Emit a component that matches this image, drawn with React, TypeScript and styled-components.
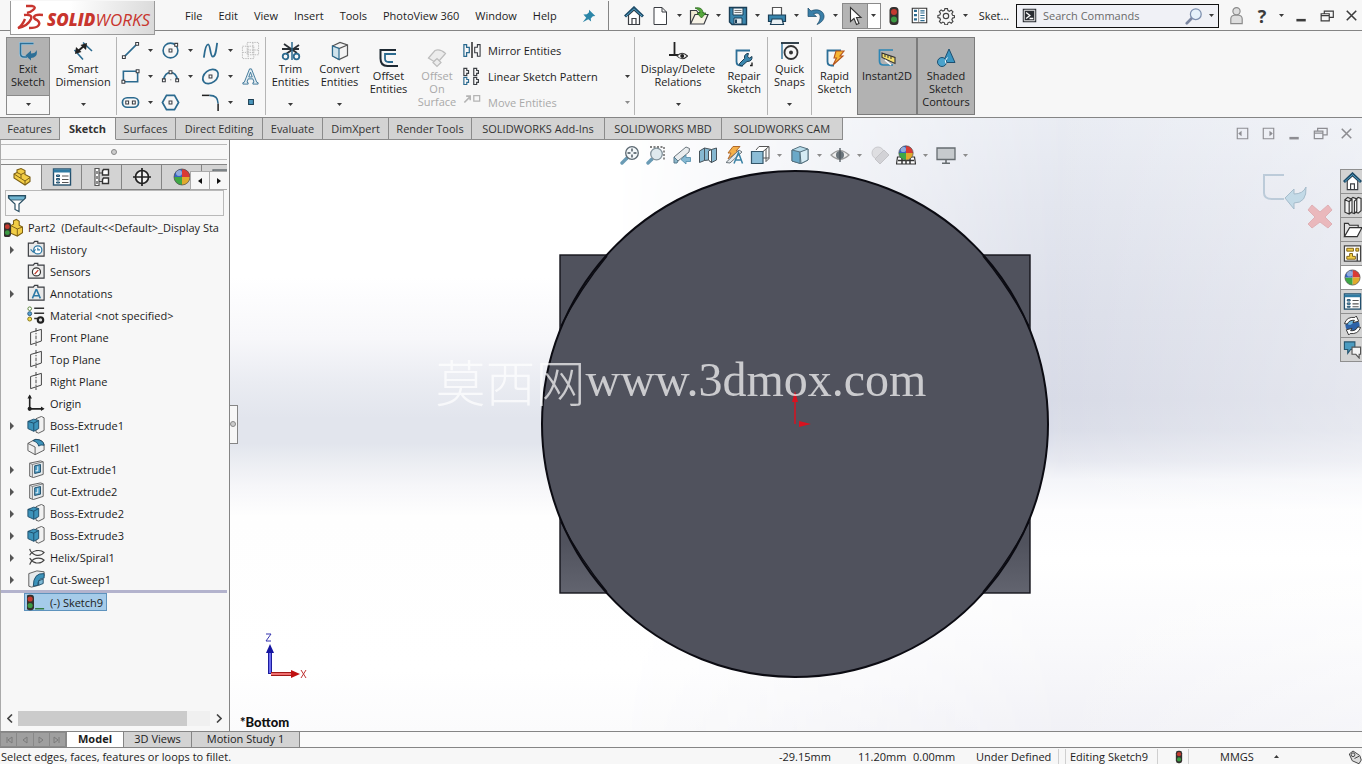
import React from "react";
import styled, { createGlobalStyle, css } from "styled-components";

const LINE = "#858585";
const BLUE = "#2b6a8f";
const DARK = "#3a3d42";
const UI_FONT = `"Open Sans", "Noto Sans", sans-serif`;

const GlobalStyle = createGlobalStyle`
  *, *::before, *::after { box-sizing: border-box; }
  body { margin: 0; background: #f7f7f7; font-family: ${UI_FONT}; font-size: 11px; color: #1c1c1c; }
  button, input { font: inherit; color: inherit; }
  ul { list-style: none; margin: 0; padding: 0; }
`;

/* ---------- icons ---------- */

const ball = (
  <>
    <path d="M10 10V2a8 8 0 0 1 8 8z" fill="#d93a35" />
    <path d="M10 10h8a8 8 0 0 1-8 8z" fill="#e0a92c" />
    <path d="M10 10v8a8 8 0 0 1-8-8z" fill="#3fa845" />
    <path d="M10 10H2a8 8 0 0 1 8-8z" fill="#3564c4" />
    <circle cx="7" cy="6" r="3" fill="#fff" opacity=".45" />
    <circle cx="10" cy="10" r="8" fill="none" stroke="#4a4a4a" strokeWidth=".7" />
  </>
);

const lights = (
  <>
    <rect x="5.500" y="1" width="9" height="18" rx="3.500" fill="#33302e" />
    <circle cx="10" cy="6" r="3" fill="#c43a30" />
    <circle cx="10" cy="13.500" r="3" fill="#3c9a43" />
  </>
);

const sheetFold = <path d="M4 1.500h8l4.500 4.500v12.500H4z M12 1.500v4.500h4.500" fill="#fff" stroke={DARK} />;

const houseIcon = (
  <>
    <path d="M4.500 9v9.500h11V9L10 4z" fill="#fff" stroke={DARK} strokeWidth="1.200" />
    <path d="M8 18.500v-6h4v6" fill="none" stroke={DARK} strokeWidth="1.200" />
    <path d="M1 10.500L10 2l9 8.500" fill="none" stroke="#1d4b68" strokeWidth="3" />
    <path d="M2 10L10 2.800 18 10" fill="none" stroke="#57a3c7" strokeWidth="1" />
  </>
);

const folderBase = <path d="M1.500 18V3.500H7l1.500-2H12v2h7V18z" fill="#e9e9e9" stroke={DARK} strokeWidth="1.300" />;

const plane = (
  <>
    <path d="M4 5l12-3.500v13L4 18.500z" fill="none" stroke="#444" strokeWidth="1.100" />
    <path d="M10 0v20" stroke="#333" strokeDasharray="4 1.500 1.500 1.500" />
  </>
);

const bossExtrude = (
  <>
    <path d="M10 3l6-2.500 3 1.500v14l-6 3-3-1z" fill="#f1f1f1" stroke="#555" />
    <path d="M1 6l6.500-2.500 5.500 1.500v9l-5.500 3L1 14z" fill="#3d93ba" stroke="#1b4a66" />
    <path d="M1 6l6.500 2 5.500-3M7.500 8v9" fill="none" stroke="#1b4a66" />
  </>
);

const cutExtrude = (
  <>
    <path d="M3 3.500L15 1l3 1v14L7 19.500 3 18z" fill="#e7eaec" stroke="#555" />
    <path d="M6 5v14M6 5l12-3M3 3.500L6 5" fill="none" stroke="#777" />
    <path d="M8.500 6.500l6.500-1.500v8.500l-6.500 1.500z" fill="#4b9bc3" stroke="#1b4a66" />
    <path d="M12 7v5H9.500" fill="none" stroke="#fff" />
  </>
);

const bracketShape = "M3 4h5v3.500h3v5H8V16H3z";

const paneList = (
  <>
    <rect x="1.500" y="2" width="17" height="16" fill="#fff" stroke="#24506d" strokeWidth="1.400" />
    <path d="M1.500 4h17" stroke="#2f7ba3" strokeWidth="3" />
    <path d="M4.500 8h3v1.500h-3zM4.500 11.500h3V13h-3zM4.500 15h3v1h-3z" fill="#77b7d6" stroke="#24506d" />
    <path d="M10 9h6.500M10 12.500h6.500M10 15.500h6.500" stroke="#555" strokeWidth="1.200" />
  </>
);

const sheetList = (
  <>
    <path d="M1.500 1.500h17v17h-17z" fill="#fff" stroke="#333" strokeWidth="1.300" />
    <path d="M9 2v16" stroke="#777" />
    <path d="M3.500 4.500h3.500M3.500 9.500h3.500M3.500 14.500h3.500" stroke={BLUE} strokeWidth="2.600" />
    <path d="M11 4.500h5M11 7h5M11 10h5M11 13h5M11 16h5" stroke={BLUE} strokeWidth="1.300" />
  </>
);

const sketchCorner = <path d="M16 2.500H2.500v11q0 4 4 4H9" fill="none" stroke="#2d6f97" strokeWidth="1.800" />;

const icons: Record<string, React.ReactNode> = {
  pin: <path d="M10 1l9 9-3.500.5-3 3 .5 4.500-4-3.500L1 19l5-6.500L2 8l5-.5 3-3z" fill="#2c86a8" />,
  home: houseIcon,
  newDoc: sheetFold,
  open: (
    <>
      <path d="M1.500 18V4.500h6l1.500 2h5V9" fill="#f1ead2" stroke={DARK} strokeWidth="1.200" />
      <path d="M1.500 18L6 8.500h13L15 18z" fill="#f7f3e6" stroke={DARK} strokeWidth="1.200" />
      <path d="M6 2c5-1 8 1 8 5h3l-4.500 5L8 7h3c0-2-2-4-5-5z" fill="#57a83c" stroke="#2c6b20" strokeWidth=".8" />
    </>
  ),
  save: (
    <>
      <path d="M1.500 1.500h17v17H4l-2.500-2.500z" fill="#3a86ad" stroke="#1b3f57" strokeWidth="1.400" />
      <path d="M5 2h10v7H5z" fill="#f0f5f8" stroke="#1b3f57" />
      <path d="M6.500 4.500h7M6.500 6.500h7" stroke="#777" />
      <path d="M6 12h8v6H6z" fill="#dbe7ee" stroke="#1b3f57" />
      <path d="M8 13.500v3.500" stroke="#1b3f57" strokeWidth="2" />
    </>
  ),
  print: (
    <>
      <path d="M5.500 9V1.500h9V9" fill="#fff" stroke="#555" strokeWidth="1.200" />
      <path d="M1.500 9h17v6.500h-17z" fill="#3a86ad" stroke="#1b3f57" strokeWidth="1.200" />
      <path d="M5 13h10l1.500 5.500h-13z" fill="#e8f0f4" stroke="#1b3f57" strokeWidth="1.200" />
    </>
  ),
  undo: <path d="M2 2v8.500h8.500L7.500 8c4-2 7.500 0 6.500 4.500-.3 2-1.500 4-3 6 5-2 7.500-5.500 7-9-.8-5.500-8-7-13-4.500z" fill="#3a7fa8" stroke="#1d4b68" strokeWidth=".7" />,
  cursor: <path d="M5.500 1.500v14l3.500-3 2.500 6 2.500-1-2.500-6h4.500z" fill="#fff" stroke="#333" strokeWidth="1.100" />,
  lights,
  options: sheetList,
  gear: (
    <>
      <circle cx="10" cy="10" r="3" fill="none" stroke="#444" strokeWidth="1.300" />
      <path
        d="M8.500 2h3l.5 2.300 1.800.8 2-1.300 2 2-1.300 2 .8 1.800 2.200.5v2.300l-2.200.5-.8 1.900 1.300 2-2 2-2-1.300-1.800.8-.5 2.200h-3l-.5-2.200-1.800-.8-2 1.300-2-2 1.300-2-.8-1.900-2.200-.5V9.800l2.200-.5.8-1.800-1.300-2 2-2 2 1.300 1.800-.8z"
        fill="none" stroke="#444" strokeWidth="1.300" transform="translate(.5 -.2) scale(.97)"
      />
    </>
  ),
  command: (
    <>
      <path d="M1 1h18v18H1z" fill="#2a2d33" />
      <path d="M3 3h14v14H3z" fill="none" stroke="#fff" strokeWidth="1.200" />
      <path d="M5.500 6l5 4-5 4M10 14h5" fill="none" stroke="#fff" strokeWidth="1.800" />
    </>
  ),
  search: (
    <>
      <path d="M8 12L2 18" stroke="#7b86a0" strokeWidth="3" strokeLinecap="round" />
      <circle cx="12" cy="8" r="6" fill="#e6f1fa" stroke="#7d8fae" strokeWidth="1.400" />
    </>
  ),
  user: (
    <g fill="#dedede" stroke="#8a8a8a" strokeWidth="1.200">
      <path d="M4 18.500v-5q0-4 6-4t6 4v5z" />
      <circle cx="10" cy="5.500" r="3.800" />
    </g>
  ),
  minimize: <path d="M4 14h11v3H4z" fill="currentColor" />,
  restore: <path d="M3.500 7.500h9v8h-9zM3.500 9.500h9M7 7V4.500h10v7h-4" fill="none" stroke="currentColor" strokeWidth="1.300" />,
  close: <path d="M5 5l10 10M15 5L5 15" stroke="currentColor" strokeWidth="1.600" />,
  prevPane: (
    <>
      <path d="M4.500 4.500h11v11h-11z" fill="none" stroke="currentColor" strokeWidth="1.200" />
      <path d="M9 7v6l-3.500-3z" fill="currentColor" />
    </>
  ),
  nextPane: (
    <>
      <path d="M4.500 4.500h11v11h-11z" fill="none" stroke="currentColor" strokeWidth="1.200" />
      <path d="M11 7v6l3.500-3z" fill="currentColor" />
    </>
  ),

  exitSketch: (
    <>
      <path d="M15.500 2.500H2.500v10q0 3.500 3.500 3.500H9" fill="none" stroke="#9fc6dc" strokeWidth="3" />
      <path d="M15.500 2.500H2.500v10q0 3.500 3.500 3.500H9" fill="none" stroke="#2d6f97" strokeWidth="1.500" />
      <path d="M7.500 14.500L13 9.500v3q4.500 0 5.500-3.500 2 7-5.500 8v2.500z" fill="#2d6f97" />
    </>
  ),
  dimension: (
    <>
      <path d="M10 1.500l9 8.500M1.500 9L10 18.500" fill="none" stroke={BLUE} strokeWidth="1.600" />
      <path d="M4 11L12 4" stroke="#222" strokeWidth="2" />
      <path d="M2 13l1-7 5.500 5zM14 2l-1 7-5.500-5z" fill="#222" />
    </>
  ),
  line: (
    <>
      <path d="M3 17L17 3" stroke={BLUE} strokeWidth="1.700" />
      <path d="M1.500 15.500h3v3h-3zM15.500 1.500h3v3h-3z" fill="#fff" stroke={DARK} strokeWidth="1.100" />
    </>
  ),
  circle: (
    <>
      <circle cx="10" cy="10" r="7.800" fill="none" stroke={BLUE} strokeWidth="1.700" />
      <path d="M8.500 8.500h3v3h-3zM14.500 2.500h3v3h-3z" fill="#fff" stroke={DARK} strokeWidth="1.100" />
    </>
  ),
  spline: <path d="M3 17.500C4 9 5 3.500 7.500 3.500S9.500 16.500 12.500 16.500 16 9 17 2" fill="none" stroke={BLUE} strokeWidth="1.900" />,
  sketchGrid: <path d="M6.500 1.500h12v13h-12zM1.500 5.500h12v13h-12zM6.500 9.500h12M12.500 1.500v13M1.500 12h12M7.500 5.500v13" fill="none" stroke="#b9b9b9" strokeWidth="1" strokeDasharray="1.500 1" />,
  rect: (
    <>
      <path d="M2.500 4.500h15v11h-15z" fill="none" stroke={BLUE} strokeWidth="1.700" />
      <path d="M1 14h3v3H1zM16 3h3v3h-3z" fill="#fff" stroke={DARK} strokeWidth="1.100" />
    </>
  ),
  arc: (
    <>
      <path d="M3 14C3 3 17 3 17 14" fill="none" stroke={BLUE} strokeWidth="1.700" />
      <path d="M1.500 12.500h3v3h-3zM15.500 12.500h3v3h-3zM8.500 4h3v3h-3z" fill="#fff" stroke={DARK} strokeWidth="1.100" />
      <path d="M9.500 13.500h1.500" stroke="#999" />
    </>
  ),
  ellipse: (
    <>
      <ellipse cx="10" cy="10" rx="9" ry="6.500" transform="rotate(-38 10 10)" fill="none" stroke={BLUE} strokeWidth="1.800" />
      <path d="M8.500 8.500h3v3h-3z" fill="#fff" stroke={DARK} strokeWidth="1.100" />
    </>
  ),
  letter: (
    <path
      d="M2 18v-1.500l1.500-.5L9 2h2l5.500 14 1.500.5V18h-5.500v-1.500l1.200-.5-1.200-3.500h-5L6.300 16l1.200.5V18zM8.200 10.500h3.600L10 5.500z"
      fill="#e3edf2" stroke={BLUE} strokeWidth=".9"
    />
  ),
  slot: (
    <>
      <rect x="1.500" y="5" width="17" height="10" rx="5" fill="none" stroke={BLUE} strokeWidth="1.800" />
      <path d="M5 8.500h3v3H5zM12 8.500h3v3h-3z" fill="#fff" stroke={DARK} strokeWidth="1.100" />
    </>
  ),
  polygon: (
    <>
      <path d="M5.800 2.500h8.400L18.500 10l-4.300 7.500H5.800L1.500 10z" fill="none" stroke={BLUE} strokeWidth="1.800" />
      <path d="M8.500 8.500h3v3h-3z" fill="#fff" stroke={DARK} strokeWidth="1.100" />
    </>
  ),
  fillet: (
    <>
      <path d="M1 2.500h8" stroke="#222" strokeWidth="1.600" />
      <path d="M18 11v8" stroke="#222" strokeWidth="1.600" />
      <path d="M9 2.500q9 0 9 8.500" fill="none" stroke={BLUE} strokeWidth="1.600" />
    </>
  ),
  point: <path d="M7 7h6v6H7z" fill="#4b97bd" stroke="#1c3d52" strokeWidth="1.300" />,
  trim: (
    <>
      <path d="M3 3l13 9M18 4L5 13M1 8h17" stroke="#2a3036" strokeWidth="1.800" />
      <path d="M11 1v18" stroke={BLUE} strokeWidth="1.500" />
      <circle cx="4.500" cy="15.500" r="2.800" fill="none" stroke={BLUE} strokeWidth="1.800" />
      <circle cx="15.500" cy="15.500" r="2.800" fill="none" stroke={BLUE} strokeWidth="1.800" />
    </>
  ),
  convert: (
    <>
      <path d="M2.500 5L10 1.500 17.500 4v10.500L9 18.500l-6.500-3.500z" fill="#f3f3f3" stroke="#555" strokeWidth="1.200" />
      <path d="M2.500 5L9 7.500 17.500 4" fill="none" stroke="#555" strokeWidth="1.200" />
      <path d="M9 7.500v11l-6.500-3.500V5z" fill="#cfe3ec" stroke={BLUE} strokeWidth="1.200" />
    </>
  ),
  offset: (
    <>
      <path d="M17 2H1.500v8.500q0 7.500 7 7.500H19" fill="none" stroke="#1f2a33" strokeWidth="2" />
      <path d="M17 6H6v4.500q0 3.500 3.500 3.500H14" fill="none" stroke={BLUE} strokeWidth="1.800" />
    </>
  ),
  offsetSurface: (
    <g fill="#ececec" stroke="#bdbdbd" strokeWidth="1.200">
      <path d="M1.500 10L8 2.500q5-2 10.500 3L12 13q-2-3-5 .5z" />
      <path d="M6 14.500l4 4 4-4-4-4z" />
    </g>
  ),
  mirror: (
    <>
      <path d="M1 4h3v3h3v6H4v4H1z" fill="none" stroke={BLUE} strokeWidth="1.400" />
      <path d="M19 4h-3v3h-3v6h3v4h3z" fill="none" stroke={DARK} strokeWidth="1.200" />
      <path d="M10 1v18" stroke="#222" strokeWidth="1.600" />
    </>
  ),
  pattern: (
    <>
      <path d={bracketShape} fill="none" stroke={DARK} strokeWidth="2" transform="translate(-1 -1) scale(.65)" />
      <path d={bracketShape} fill="none" stroke={DARK} strokeWidth="2" transform="translate(10 -1) scale(.65)" />
      <path d={bracketShape} fill="none" stroke={BLUE} strokeWidth="2" transform="translate(-1 9) scale(.65)" />
      <path d={bracketShape} fill="none" stroke={DARK} strokeWidth="2" transform="translate(10 9) scale(.65)" />
    </>
  ),
  move: (
    <>
      <path d="M1.500 10.500L8 4M3.500 3.500H8V8" fill="none" stroke="#b4b4b4" strokeWidth="1.800" />
      <path d="M12 3h6.500v6H12z" fill="none" stroke="#b4b4b4" strokeWidth="1.400" />
    </>
  ),
  relations: (
    <>
      <path d="M6.500 1v13M1 14h10" stroke="#222" strokeWidth="1.800" />
      <path d="M9 15q5-5.500 10.500 0-5.500 5.500-10.500 0z" fill="#fff" stroke="#333" strokeWidth="1.100" />
      <circle cx="14.200" cy="15" r="2" fill="#222" />
    </>
  ),
  repair: (
    <>
      {sketchCorner}
      <path d="M16 17.500h2v-3" fill="none" stroke="#222" strokeWidth="1.400" />
      <path d="M5.500 15.500l5-5q-1-3.500 2.500-5l1.500 0-1 3 2 1.500 2.500-1.500q.5 5-5 5l-5 4.500q-3 0-2.500-2.500z" fill="#3a86ad" stroke="#1d3e54" strokeWidth="1" />
    </>
  ),
  snaps: (
    <>
      <path d="M1 2h18M2 2v16" stroke="#2d6f97" strokeWidth="1.400" />
      <path d="M1 2h18" stroke="#222" strokeWidth="1.400" />
      <circle cx="11" cy="11.500" r="6.500" fill="none" stroke="#333" strokeWidth="1.800" />
      <circle cx="11" cy="11.500" r="2" fill="#333" />
    </>
  ),
  rapid: (
    <>
      {sketchCorner}
      <path d="M11 3h8l-4 5h3l-10 9 3.500-7H9z" fill="#f7b733" stroke="#b4541e" strokeWidth="1.100" />
    </>
  ),
  instant: (
    <>
      <path d="M16 2H2.500v11q0 4 4 4H16" fill="none" stroke="#2d86b5" strokeWidth="1.700" />
      <path d="M5 5l13 4.500v6L5 9.500z" fill="#f3dd6b" stroke="#333" strokeWidth="1.100" />
      <path d="M8 6v3M11 7v3M14 8v3" stroke="#333" />
      <path d="M8 12l6 5" stroke="#fff" strokeWidth="1.500" />
    </>
  ),
  contours: (
    <>
      <path d="M13 1l6 13.500H7z" fill="#3a94c0" stroke="#1d4f70" />
      <circle cx="6" cy="14" r="4.500" fill="#4ba3cc" stroke="#1d4f70" />
      <path d="M10 15.500q-2-3 1.500-6" fill="none" stroke="#fff" />
    </>
  ),

  zoomFit: (
    <>
      <path d="M7 13l-5 5" stroke="#6a9bb5" strokeWidth="3.400" strokeLinecap="round" />
      <circle cx="12" cy="8" r="6.300" fill="#f4f8fa" stroke="#5c6972" strokeWidth="1.300" />
      <path d="M12 3.500v3M12 9.500v3M7.500 8h3M13.500 8h3" stroke="#44505a" strokeWidth="1.400" />
    </>
  ),
  zoomArea: (
    <>
      <path d="M4 2h14v14" fill="none" stroke="#555" strokeDasharray="2 1.500" strokeWidth="1.300" />
      <path d="M6 14l-4 4" stroke="#6a9bb5" strokeWidth="3.400" strokeLinecap="round" />
      <circle cx="10.500" cy="9" r="5.800" fill="#dfe9ee" stroke="#83929b" strokeWidth="1.300" />
    </>
  ),
  prevView: (
    <>
      <path d="M2 12L14 2l3.500 1.500L17 7 6 16z" fill="#e9edef" stroke="#6b757c" />
      <path d="M2 12l4 4-1 2H2z" fill="#8fb9cc" stroke="#55798c" />
      <path d="M9 14.500l5-4.500v2.500h4.500v4H14V19z" fill="#86b9d3" stroke="#4f8aa8" strokeWidth=".8" />
    </>
  ),
  section: (
    <>
      <path d="M1.500 6l5-3 7 1.500L18.500 3v12l-5 2.500-3-2.500-4 .5-5 2z" fill="#86b8d1" stroke="#47535b" />
      <path d="M6.500 3v12.500M10.500 6v9M13.500 4.500v13" stroke="#47535b" />
      <path d="M10.500 6l3-1.500v13l-3-2.500z" fill="#fff" stroke="#47535b" />
    </>
  ),
  annotate: (
    <>
      <path d="M9 1.500h7l-4 4.500h3L4 14l3-6H4z" fill="#f5b04a" stroke="#b06a2c" />
      <path d="M2 17.500L15 5l3 2L6 18z" fill="#e4e8ea" stroke="#6b757c" />
      <path d="M10 18.500l4.500-11 4 11M11.500 15h6" fill="none" stroke="#3a82a5" strokeWidth="1.500" />
    </>
  ),
  orient: (
    <>
      <path d="M6 5l3-3.500h10v12L15.500 17" fill="#fff" stroke="#555" />
      <path d="M1.500 6.500h11.500v12H1.500z" fill="#8cbdd6" stroke="#35576a" strokeWidth="1.200" />
      <path d="M13 6.500L19 1.500M13 13h6M16 4v12" fill="none" stroke="#555" />
    </>
  ),
  shaded: (
    <>
      <path d="M2 5l8-3.500L18 4v11l-7 3.500L2 16z" fill="#b8dceb" stroke="#54707e" />
      <path d="M2 5l8 2v11.500L2 16z" fill="#6ba9c8" stroke="#54707e" />
      <path d="M10 7l8-3v11l-7 3.500z" fill="#d5ecf5" stroke="#54707e" />
    </>
  ),
  eye: (
    <>
      <path d="M1 10q9-9 18 0-9 8.500-18 0z" fill="#ededed" stroke="#9a9a9a" strokeWidth="1.200" />
      <circle cx="10" cy="10" r="4" fill="#6a747b" />
      <path d="M10 3v14" stroke="#4d565c" strokeWidth="1.300" />
    </>
  ),
  appearance: (
    <>
      <circle cx="8" cy="8" r="6" fill="#dedee1" stroke="#c9c9cd" />
      <path d="M5 14L14 5l5 5-9 9z" fill="#d2d2d6" stroke="#c4c4c8" />
    </>
  ),
  scene: (
    <>
      <path d="M1.500 12h17l1 7H.5z" fill="#fff" stroke="#333" strokeWidth="1.200" />
      <path d="M2 15.500h16M6 12v7M10 12v7M14 12v7" stroke="#333" strokeWidth="1.500" />
      <g transform="translate(1 -1) scale(.9)">{ball}</g>
    </>
  ),
  monitor: (
    <>
      <path d="M1 3h18v11.500H1z" fill="#c6cacd" stroke="#666c70" strokeWidth="1.300" />
      <path d="M10 15v3M6 18.300h8" stroke="#666c70" strokeWidth="1.600" />
    </>
  ),

  part: (
    <>
      <path d="M2 7l3-1.500V3l4-1.500L13 3.500v4l5 2.500v4.500L13 18 2 11z" fill="#f2cd45" stroke="#7d6014" strokeWidth="1.100" />
      <path d="M2 7l11 7 5-3.500M13 14v4M5 5.500l4 2 4-2M9 7.500V11" fill="none" stroke="#7d6014" />
    </>
  ),
  property: paneList,
  config: (
    <>
      <path d="M3 1.500h4v17H3z" fill="#fff" stroke="#555" strokeWidth="1.200" />
      <path d="M5 4v3M5 9v3M5 14v3M7 6h3M7 14.500h3" fill="none" stroke="#444" strokeWidth="1.200" />
      <path d="M10.500 4l1-1.500h5V8h-6zM10.500 12.500l1-1.500h5v5.500h-6z" fill="#fff" stroke="#333" strokeWidth="1.400" />
    </>
  ),
  target: (
    <>
      <circle cx="10" cy="10" r="6.500" fill="#f2f2f2" stroke="#222" strokeWidth="1.700" />
      <path d="M10 1v18M1 10h18" stroke="#222" strokeWidth="1.700" />
    </>
  ),
  ball,
  filter: (
    <>
      <path d="M1.500 2.500h17v2.500L12 11v7.500l-4-2V11L1.500 5z" fill="#fff" stroke="#2a4f63" strokeWidth="1.200" />
      <path d="M2 3h16v2l-2 2H4L2 5z" fill="#6fb4d0" stroke="#2a4f63" strokeWidth=".8" />
    </>
  ),
  partRoot: (
    <>
      <path d="M7 8l3-1.500V3l3-1.500L16 3.500v4l3.500 2v6L14 19l-7-3z" fill="#f2cd45" stroke="#7d6014" strokeWidth="1.100" />
      <path d="M7 8l7 3.500 5.500-2M14 11.500V19" fill="none" stroke="#7d6014" />
      <g transform="translate(-5 4) scale(.85)">{lights}</g>
    </>
  ),
  history: (
    <>
      {folderBase}
      <circle cx="12" cy="11" r="4.500" fill="#fff" stroke="#2d79a6" strokeWidth="1.400" />
      <path d="M12 8.500V11h2.500M4 10.500l3 3 2.500-3" fill="none" stroke="#2d79a6" strokeWidth="1.300" />
    </>
  ),
  sensors: (
    <>
      {folderBase}
      <circle cx="10.500" cy="11" r="4.500" fill="#fff" stroke="#333" strokeWidth="1.300" />
      <path d="M8.500 13.500l4-4.500" stroke="#c0392b" strokeWidth="1.500" />
    </>
  ),
  annotations: (
    <>
      {folderBase}
      <path d="M6 16l4-9.500h.8l4 9.500M7.500 13h6" fill="none" stroke="#2d79a6" strokeWidth="1.700" />
    </>
  ),
  material: (
    <>
      <path d="M8 2.500h11M8 8h11M8 14h5" stroke="#333" strokeWidth="1.700" />
      <circle cx="3" cy="3" r="2" fill="#fff" stroke="#4f7a2f" />
      <circle cx="3" cy="8.500" r="2.200" fill="#58a0d0" stroke="#27567a" />
      <circle cx="3" cy="14.500" r="2.200" fill="#f3dc4b" stroke="#7d6d14" />
      <circle cx="15" cy="15.500" r="3" fill="#ddd" stroke="#222" strokeWidth="2.400" />
    </>
  ),
  plane,
  origin: (
    <>
      <path d="M3 2v14.500H18" fill="none" stroke="#222" strokeWidth="1.800" />
      <path d="M.5 5L3 .5 5.500 5zM15.500 14l4 2.500-4 2.500z" fill="#222" />
      <circle cx="3" cy="16.500" r="2.300" fill="#222" />
    </>
  ),
  boss: bossExtrude,
  filletFeature: (
    <>
      <path d="M1 6l8-4.500q9 0 10 6v6L9 18.500 1 14z" fill="#f0f0f0" stroke="#555" />
      <path d="M1 6l8 4v8.500" fill="none" stroke="#555" />
      <path d="M6.500 3L10 1.500q8 .5 9 6.500-4-1-6 1-1-4.500-6.500-6z" fill="#3d93ba" stroke="#1b4a66" />
    </>
  ),
  cut: cutExtrude,
  helix: (
    <path
      d="M3 1q1 5 7 7 6 1 9-3-3-3-9-2-5 1-7 5M3 11q2 4 7 5.500 6 1 9-3-3-3-9-2-5 1-7 7"
      fill="none" stroke="#444" strokeWidth="1.300"
    />
  ),
  sweep: (
    <>
      <path d="M2 4l9-3 8 1v5l-6 3v7l-8 2-3-1z" fill="#e7eaec" stroke="#555" />
      <path d="M19 4Q7 3 7 18l5-1q0-8 7-8z" fill="#3d93ba" stroke="#1b4a66" />
      <path d="M13 12l5-2v5l-5 2z" fill="#7fbad6" stroke="#1b4a66" />
    </>
  ),
  sketchNode: (
    <>
      <g transform="translate(-6 1) scale(.95)">{lights}</g>
      <path d="M9 17.500h10" stroke="#2f7a3b" strokeWidth="1.600" />
    </>
  ),
  library: (
    <g fill="#f3f3f3" stroke="#333" strokeWidth="1.200">
      <path d="M13 4l3-2.500 3 1v13L16 18l-3-1z" />
      <path d="M7.500 4l3-2.500 4 1.500v13L12 18.500l-4.500-1.500z" />
      <path d="M2 4l3-2.500L9.500 3.500v13L6.500 19 2 17zM2 4l4.500 2L9.500 3.500M6.500 6v13" />
      <path d="M12 18V5.500l2.500-2.500" fill="none" />
    </g>
  ),
  folder: (
    <>
      <path d="M1.500 17.500V3.500h4l1.500 2h9V8" fill="#e2e2e2" stroke="#333" strokeWidth="1.200" />
      <path d="M1.500 17.500L7 8h13l-5 9.500z" fill="#fff" stroke="#333" strokeWidth="1.200" />
    </>
  ),
  palette: (
    <>
      <path d="M1.500 2h17v16h-17z" fill="#fff" stroke="#444" strokeWidth="1.300" />
      <path d="M4 4.500h7v3H4zM13.500 4.500h3v3h-3zM7 10h3v3h3v3H4v-3h3z" fill="#f2cd45" stroke="#7d6014" />
      <path d="M15 10v8" stroke="#444" strokeWidth="1.500" />
    </>
  ),
  refresh: (
    <>
      <circle cx="10" cy="10" r="7.500" fill="#2d62a8" />
      <path d="M4 8q1-4 6-5 3 2 0 5t-6 0z" fill="#6ab2dc" />
      <path d="M1.500 8q2.500-7.500 11-6.500L14 0l2.500 5.500-6 1.500 1.500-2.500Q6.500 4 4.500 8.500z" fill="#fff" stroke="#333" />
      <path d="M18.500 12q-2.500 7.500-11 6.500L6 20l-2.500-5.500 6-1.500L8 15.500q5.500.5 7.500-4z" fill="#fff" stroke="#333" />
    </>
  ),
  chat: (
    <>
      <path d="M1.500 2h11v8H8l-3 4v-4H1.500z" fill="#4b9bc0" stroke="#27566f" strokeWidth="1.200" />
      <path d="M9.500 7.500h9V15H17v4l-3.500-4h-4z" fill="#f4f4f4" stroke="#555" strokeWidth="1.200" />
    </>
  ),
  tag: (
    <g fill="#ddd" stroke="#444" strokeWidth="1.300">
      <path d="M3 6l5-4 9 6 2 6-3 5-9-4z" />
      <circle cx="8" cy="7" r="2.500" />
      <path d="M10 12l6-3" />
    </g>
  ),
};

const Icon = ({ name, size = 20 }: { name: string; size?: number }) => (
  <svg width={size} height={size} viewBox="0 0 20 20" aria-hidden="true">
    {icons[name]}
  </svg>
);

const CaretShape = styled.svg<{ $faded?: boolean }>`
  display: block;
  fill: ${(p) => (p.$faded ? "#8c8c8c" : "#3a3a3a")};
`;
const Caret = ({ faded, up }: { faded?: boolean; up?: boolean }) => (
  <CaretShape $faded={faded} width="5" height="3" viewBox="0 0 5 3" aria-hidden="true">
    <path d={up ? "M0 3h5L2.500 0z" : "M0 0h5L2.500 3z"} />
  </CaretShape>
);

/* ---------- shared parts ---------- */

const plainButton = css`
  appearance: none;
  border: 0;
  padding: 0;
  margin: 0;
  background: none;
  display: flex;
  align-items: center;
  justify-content: center;
  flex-shrink: 0;
`;

const IconCell = styled.button<{ $w?: number }>`
  ${plainButton}
  width: ${(p) => p.$w ?? 26}px;
  height: 24px;
`;

const CaretCell = styled.button`
  ${plainButton}
  width: 13px;
  height: 24px;
`;

/* ---------- title bar ---------- */

const Page = styled.div`
  min-height: 100vh;
  display: flex;
  flex-direction: column;
  overflow: hidden;
`;

const TitleBar = styled.header`
  height: 31px;
  flex-shrink: 0;
  display: flex;
  align-items: center;
  padding-top: 1px;
  border-bottom: 1px solid ${LINE};
  background: #f7f7f7;
  position: relative;
  z-index: 2;
`;

const Brand = styled.div`
  align-self: flex-start;
  width: 145px;
  height: 34px;
  margin-left: 10px;
  flex-shrink: 0;
  padding-left: 5px;
  border: 1px solid #9a9a9a;
  border-top: 0;
  background: linear-gradient(100deg, #fff 40%, #d9d9d9);
  display: flex;
  align-items: center;
  gap: 4px;
`;

const BrandName = styled.span`
  font: italic 17px/20px "Open Sans", sans-serif;
  color: #c8352e;
  white-space: nowrap;
  padding-top: 4px;
  b { font-weight: 800; }
`;

const MenuBar = styled.nav`
  display: flex;
  align-items: center;
  align-self: stretch;
  gap: 16px;
  padding: 0 2px 0 30px;
  border-right: 1px solid ${LINE};
`;

const MenuItem = styled.button`
  ${plainButton}
  line-height: 20px;
  white-space: nowrap;
`;

const QuickTools = styled.div`
  display: flex;
  align-items: center;
  padding-left: 13px;
`;

const SelectTool = styled.div`
  display: flex;
  border: 1px solid #8a8a8a;
  background: #fff;
  ${IconCell} { width: 25px; background: #b4b4b4; border-right: 1px solid #8a8a8a; }
  ${CaretCell} { width: 12px; }
`;

const DocName = styled.span`
  flex: 1;
  padding-left: 7px;
  white-space: nowrap;
`;

const SearchBox = styled.form`
  width: 203px;
  height: 24px;
  display: flex;
  align-items: center;
  gap: 6px;
  padding: 0 4px 0 5px;
  border: 1px solid #111;
  background: #f0f1f6;
  svg { flex-shrink: 0; }
`;

const SearchInput = styled.input`
  flex: 1;
  min-width: 0;
  border: 0;
  padding: 0;
  outline: 0;
  background: none;
  &::placeholder { color: #6a6a6a; opacity: 1; }
`;

const WindowTools = styled.div`
  display: flex;
  align-items: center;
  padding-left: 4px;
  color: #3c3c3c;
`;

const HelpMark = styled.span`
  font: 700 18px/20px "Open Sans", sans-serif;
`;

/* ---------- ribbon ---------- */

const Ribbon = styled.section`
  height: 87px;
  flex-shrink: 0;
  display: flex;
  align-items: flex-start;
  padding: 6px 0 0 6px;
  background: #f7f7f7;
  border-bottom: 1px solid ${LINE};
`;

const Tool = styled.button<{ $w: number; $low?: boolean; $on?: boolean; $off?: boolean }>`
  ${plainButton}
  flex-direction: column;
  justify-content: flex-start;
  width: ${(p) => p.$w}px;
  height: 78px;
  padding-top: ${(p) => (p.$low ? (p.$on ? 10 : 11) : 4)}px;
  line-height: 13px;
  white-space: pre-line;
  text-align: center;
  color: ${(p) => (p.$off ? "#a9a9a9" : "inherit")};
  border: ${(p) => (p.$on ? `1px solid #7b7b7b` : "0")};
  background: ${(p) => (p.$on ? "#b2b2b2" : "none")};
`;

const ToolLabel = styled.span`
  margin-top: 1px;
`;

const ToolCaret = styled.span`
  margin-top: auto;
  padding-bottom: 9px;
`;

const SplitTool = styled.div`
  width: 44px;
  height: 78px;
  display: flex;
  flex-direction: column;
  border: 1px solid #8a8a8a;
  ${Tool} { width: 100%; height: 58px; padding-top: 3px; background: #b2b2b2; border-bottom: 1px solid #8a8a8a; }
  ${CaretCell} { width: 100%; height: 17px; }
`;

const Divider = styled.div`
  width: 1px;
  height: 78px;
  flex-shrink: 0;
  background: #b5b5b5;
`;

const SketchGrid = styled.div`
  display: grid;
  grid-template-columns: repeat(4, 27px 13px);
  grid-auto-rows: 26px;
  width: 148px;
  overflow: hidden;
  align-items: center;
`;

const CommandList = styled.ul`
  width: 173px;
`;

const CommandRow = styled.li<{ $off?: boolean }>`
  display: flex;
  align-items: center;
  height: 26px;
  padding-left: 2px;
  color: ${(p) => (p.$off ? "#a9a9a9" : "inherit")};
  ${CaretCell} { margin-left: auto; }
`;

const CommandButton = styled.button`
  ${plainButton}
  gap: 7px;
  white-space: nowrap;
`;

/* ---------- workspace ---------- */

const Workspace = styled.main`
  flex: 1;
  position: relative;
  display: flex;
  flex-direction: column;
`;

const Canvas = styled.div`
  position: absolute;
  inset: 0 0 0 229px;
  display: grid;
  place-items: center;
  overflow: hidden;
  border-left: 1px solid ${LINE};
  background: linear-gradient(#fff 26%, #f7f7fa 36%, #eaecf2 43%, #e2e5ed 49%, #e2e5ed 53%, #ebedf2 56%, #f6f6f9 60%, #fefefe 65%, #fff 90%, #fbfbfc);
  &::before {
    content: "";
    position: absolute;
    inset: 0;
    background:
      linear-gradient(to right, transparent 72%, rgba(255, 255, 255, 0.35)),
      linear-gradient(#e9ecf3, #e2e5ee 14%, #dbdee9 32%, #d7dae6 46%, #dadde8 51%, #e6e8f0 56%, #f4f5f9 59%, #fdfdfe 64%, #fff 72%, #f9f9fb 86%, #f1f1f6);
    mask-image: linear-gradient(to right, transparent 34%, #000 74%);
  }
`;

const ModelDrawing = styled.svg`
  position: relative;
  display: block;
  margin: 0 2px 2px 0;
`;

const PanelHandle = styled.button`
  ${plainButton}
  position: absolute;
  left: -1px;
  top: 50%;
  width: 9px;
  height: 39px;
  margin-top: -20px;
  border: 1px solid ${LINE};
  border-left: 0;
  background: #f7f7f7;
`;

const Dot = styled.span`
  width: 6px;
  height: 6px;
  border-radius: 50%;
  border: 1px solid #888;
  background: #ccc;
`;

const TabRow = styled.div`
  position: relative;
  display: flex;
  height: 22px;
  flex-shrink: 0;
`;

const RibbonTab = styled.button<{ $w: number; $on?: boolean }>`
  ${plainButton}
  width: ${(p) => p.$w}px;
  white-space: nowrap;
  color: #333;
  font-weight: ${(p) => (p.$on ? 700 : 400)};
  background: ${(p) => (p.$on ? "#f7f7f7" : "#d3d3d3")};
  border-right: 1px solid #8b8b8b;
  border-bottom: 1px solid ${(p) => (p.$on ? "#f7f7f7" : "#8b8b8b")};
`;

const ViewWindowTools = styled.div`
  display: flex;
  margin-left: auto;
  padding: 3px 3px 0 0;
  color: #8d8d92;
`;

const Body = styled.div`
  flex: 1;
  display: flex;
  min-height: 0;
`;

const SidePanel = styled.aside`
  position: relative;
  width: 229px;
  flex-shrink: 0;
  display: flex;
  flex-direction: column;
  padding-right: 2px;
  border-left: 1px solid #aaa;
  background: #f7f7f7;
`;

const PanelGrip = styled.div`
  height: 16px;
  margin-top: 4px;
  flex-shrink: 0;
  display: flex;
  align-items: center;
  justify-content: center;
  border: 1px solid #b9b9b9;
  border-left: 0;
  border-right: 0;
`;

const PanelTabs = styled.div`
  position: relative;
  display: flex;
  height: 26px;
  margin-top: 4px;
  padding-left: 1px;
  flex-shrink: 0;
  overflow: hidden;
  border-top: 1px solid ${LINE};
`;

const PanelTab = styled.button<{ $on?: boolean }>`
  ${plainButton}
  width: 40px;
  background: ${(p) => (p.$on ? "#f7f7f7" : "#d3d3d3")};
  border-right: 1px solid ${LINE};
  border-bottom: 1px solid ${(p) => (p.$on ? "#f7f7f7" : LINE)};
`;

const TabScroll = styled.div`
  position: absolute;
  right: 0;
  bottom: 0;
  display: flex;
  background: #f7f7f7;
  border: 1px solid #aaa;
  border-right: 0;
  ${CaretCell} { width: 18px; height: 17px; }
  ${CaretCell} + ${CaretCell} { border-left: 1px solid #aaa; }
`;

const FilterBar = styled.label`
  display: flex;
  align-items: center;
  gap: 6px;
  height: 26px;
  margin: 0 3px 0 4px;
  flex-shrink: 0;
  border: 1px solid #b9b9b9;
  padding-left: 1px;
`;

const Tree = styled.ul`
  flex: 1;
  overflow: hidden;
`;

const TreeRow = styled.li<{ $root?: boolean }>`
  display: flex;
  align-items: center;
  height: 22px;
  padding-left: ${(p) => (p.$root ? 0 : 8)}px;
  white-space: pre;
`;

const Expander = styled.span`
  width: 15px;
  flex-shrink: 0;
`;

const TreeItem = styled.button<{ $on?: boolean }>`
  ${plainButton}
  gap: 5px;
  height: 18px;
  white-space: pre;
  border: 1px solid ${(p) => (p.$on ? "#5e93bd" : "transparent")};
  background: ${(p) => (p.$on ? "#a5cbe9" : "none")};
  padding: 0 3px 0 2px;
`;

const RollbackBar = styled.li`
  height: 3px;
  background: #b3b3cd;
`;

const ActiveRow = styled(TreeRow)`
  height: 18px;
`;

const ScrollStrip = styled.div`
  display: flex;
  align-items: center;
  height: 17px;
  margin-bottom: 4px;
  flex-shrink: 0;
  ${CaretCell} { width: 17px; }
`;

const ScrollTrack = styled.div`
  flex: 1;
  height: 15px;
  padding-right: 23px;
  background: #f0f0f0;
`;

const ScrollThumb = styled.div`
  height: 100%;
  background: #cbcbcb;
`;

const Viewport = styled.section`
  position: relative;
  flex: 1;
  min-width: 0;
`;

const ViewTools = styled.div`
  display: flex;
  justify-content: center;
  padding: 3px 2px 0 0;
  ${CaretCell} { width: 14px; }
`;

const ConfirmCorner = styled.svg`
  position: absolute;
  right: 28px;
  top: 32px;
`;

const TaskPane = styled.nav`
  position: absolute;
  right: 0;
  top: 29px;
  width: 22px;
  border: 1px solid #8f8f8f;
  border-right: 0;
  border-bottom: 0;
`;

const TaskButton = styled.button<{ $on?: boolean }>`
  ${plainButton}
  width: 21px;
  height: 24px;
  overflow: hidden;
  justify-content: flex-start;
  padding-left: 2px;
  border-bottom: 1px solid #8f8f8f;
  background: ${(p) => (p.$on ? "#fff" : "#d3d3d3")};
  svg { flex-shrink: 0; }
`;

const Triad = styled.svg`
  position: absolute;
  left: 31px;
  bottom: 48px;
`;

const ViewName = styled.span`
  position: absolute;
  left: 11px;
  bottom: 1px;
  font: 900 13px/16px Lato, sans-serif;
  color: #111;
`;

const Watermark = styled.div`
  position: fixed;
  inset: 0;
  z-index: 3;
  display: flex;
  align-items: center;
  justify-content: center;
  padding-bottom: 4px;
  pointer-events: none;
  color: rgba(255, 255, 255, 0.7);
  font: 48px/56px "Liberation Serif", serif;
  white-space: nowrap;
`;

const WatermarkName = styled.span`
  font: 300 50px/56px "Noto Sans CJK SC", sans-serif;
`;

/* ---------- bottom ---------- */

const BottomTabs = styled.div`
  display: flex;
  height: 17px;
  flex-shrink: 0;
  background: #fafafa;
  border: 1px solid ${LINE};
  border-left: 0;
  border-right: 0;
`;

const NavKeys = styled.div`
  display: flex;
  width: 67px;
  background: #9f9f9f;
  border: 1px solid #8a8a8a;
`;

const NavKey = styled.button`
  ${plainButton}
  flex: 1;
  border-right: 1px solid #888;
`;

const BottomTab = styled.button<{ $w: number; $on?: boolean }>`
  ${plainButton}
  width: ${(p) => p.$w}px;
  padding-bottom: 1px;
  line-height: 14px;
  font-weight: ${(p) => (p.$on ? 700 : 400)};
  background: ${(p) => (p.$on ? "#fff" : "#d3d3d3")};
  border-right: 1px solid ${LINE};
`;

const StatusBar = styled.footer`
  display: flex;
  align-items: center;
  height: 16px;
  flex-shrink: 0;
  line-height: 15px;
  padding: 1px 0 0 1px;
  white-space: nowrap;
  background: #f7f7f7;
`;

const StatusHint = styled.span`
  flex: 1;
`;

const StatusField = styled.span<{ $w: number; $line?: boolean }>`
  width: ${(p) => p.$w}px;
  height: 15px;
  display: flex;
  align-items: center;
  flex-shrink: 0;
  border-right: ${(p) => (p.$line ? "1px solid #cfcfcf" : "0")};
`;

/* ---------- data ---------- */

const menus = ["File", "Edit", "View", "Insert", "Tools", "PhotoView 360", "Window", "Help"];

const fileTools: [string, string][] = [
  ["newDoc", "New"],
  ["open", "Open"],
  ["save", "Save"],
  ["print", "Print"],
  ["undo", "Undo"],
];

const gridTools: [string, boolean][] = [
  ["line", true], ["circle", true], ["spline", true], ["sketchGrid", false],
  ["rect", true], ["arc", true], ["ellipse", true], ["letter", false],
  ["slot", true], ["polygon", false], ["fillet", true], ["point", false],
];

const ribbonTabs: [string, number][] = [
  ["Features", 60], ["Sketch", 56], ["Surfaces", 60], ["Direct Editing", 87], ["Evaluate", 60],
  ["DimXpert", 66], ["Render Tools", 83], ["SOLIDWORKS Add-Ins", 133], ["SOLIDWORKS MBD", 117], ["SOLIDWORKS CAM", 121],
];

const viewTools: [string, boolean][] = [
  ["zoomFit", false], ["zoomArea", false], ["prevView", false], ["section", false], ["annotate", false],
  ["orient", true], ["shaded", true], ["eye", true], ["appearance", false], ["scene", true], ["monitor", true],
];

const features: { icon: string; name: string; open?: boolean }[] = [
  { icon: "history", name: "History", open: true },
  { icon: "sensors", name: "Sensors" },
  { icon: "annotations", name: "Annotations", open: true },
  { icon: "material", name: "Material <not specified>" },
  { icon: "plane", name: "Front Plane" },
  { icon: "plane", name: "Top Plane" },
  { icon: "plane", name: "Right Plane" },
  { icon: "origin", name: "Origin" },
  { icon: "boss", name: "Boss-Extrude1", open: true },
  { icon: "filletFeature", name: "Fillet1" },
  { icon: "cut", name: "Cut-Extrude1", open: true },
  { icon: "cut", name: "Cut-Extrude2", open: true },
  { icon: "boss", name: "Boss-Extrude2", open: true },
  { icon: "boss", name: "Boss-Extrude3", open: true },
  { icon: "helix", name: "Helix/Spiral1", open: true },
  { icon: "sweep", name: "Cut-Sweep1", open: true },
];

const taskButtons: [string, string][] = [
  ["home", "Resources"], ["library", "Design Library"], ["folder", "File Explorer"], ["palette", "View Palette"],
  ["ball", "Appearances"], ["property", "Custom Properties"], ["refresh", "Updates"], ["chat", "Forum"],
];

/* ---------- pieces ---------- */

type RibbonToolProps = {
  icon: string; label: string; w: number; low?: boolean; on?: boolean; off?: boolean; menu?: boolean;
};

const RibbonTool = ({ icon, label, w, low, on, off, menu }: RibbonToolProps) => (
  <Tool $w={w} $low={low} $on={on} $off={off} disabled={off}>
    <Icon name={icon} />
    <ToolLabel>{label}</ToolLabel>
    {menu && <ToolCaret><Caret /></ToolCaret>}
  </Tool>
);

const Model = () => (
  <ModelDrawing width="510" height="510" viewBox="-255 -255 510 510" role="img" aria-label="Part, bottom view">
    <defs>
      <linearGradient id="block" x1="0" y1="0" x2="0" y2="1">
        <stop offset="0.85" stopColor="#50525d" />
        <stop offset="1" stopColor="#62646f" />
      </linearGradient>
    </defs>
    <rect x="-235" y="-169" width="470" height="338" fill="url(#block)" stroke="#14141c" strokeWidth="1.400" />
    <circle r="253" fill="#50525d" stroke="#0b0b12" strokeWidth="2" />
    <path d="M-234 -98Q-215 -135 -188 -168M234 -98Q215 -135 188 -168M-234 98Q-215 135 -188 168M234 98Q215 135 188 168" fill="none" stroke="#0b0b12" strokeWidth="1.300" />
    <path d="M0 0V-24" stroke="#d8121f" strokeWidth="1.500" />
    <path d="M-3 -22L0 -33 3 -22zM4 -3L16 0 4 3z" fill="#d8121f" />
  </ModelDrawing>
);

const SolidLogo = () => (
  <svg width="27" height="28" viewBox="0 0 27 28" aria-hidden="true">
    <g fill="none" stroke="#c8352e" strokeWidth="2.400">
      <path d="M10 2h6q5 1 1 4-2 2-6 3" />
      <path d="M8 11q9-1 7 4-3 7-13 9 4-2 7-9" />
      <path d="M27 11q-8-1-9 2 0 2 3 3 4 3 1 6-2 2-9 2" />
    </g>
  </svg>
);

export default function App() {
  return (
    <Page>
      <GlobalStyle />
      <TitleBar>
        <Brand>
          <SolidLogo />
          <BrandName><b>SOLID</b>WORKS</BrandName>
        </Brand>
        <MenuBar>
          {menus.map((m) => <MenuItem key={m}>{m}</MenuItem>)}
          <IconCell aria-label="Pin menu" $w={33}><Icon name="pin" size={14} /></IconCell>
        </MenuBar>
        <QuickTools>
          <IconCell $w={25} aria-label="Home"><Icon name="home" /></IconCell>
          {fileTools.map(([icon, label]) => (
            <React.Fragment key={icon}>
              <IconCell aria-label={label}><Icon name={icon} /></IconCell>
              <CaretCell aria-label={`${label} options`}><Caret /></CaretCell>
            </React.Fragment>
          ))}
          <SelectTool>
            <IconCell aria-label="Select"><Icon name="cursor" /></IconCell>
            <CaretCell aria-label="Select options"><Caret /></CaretCell>
          </SelectTool>
          <IconCell aria-label="Rebuild"><Icon name="lights" /></IconCell>
          <IconCell aria-label="File properties"><Icon name="options" size={17} /></IconCell>
          <IconCell aria-label="Options"><Icon name="gear" size={18} /></IconCell>
          <CaretCell aria-label="More options"><Caret /></CaretCell>
        </QuickTools>
        <DocName>Sket...</DocName>
        <SearchBox role="search" onSubmit={(e) => e.preventDefault()}>
          <Icon name="command" size={15} />
          <SearchInput aria-label="Search Commands" placeholder="Search Commands" />
          <Icon name="search" size={18} />
          <Caret />
        </SearchBox>
        <WindowTools>
          <IconCell aria-label="Account"><Icon name="user" size={19} /></IconCell>
          <IconCell aria-label="Help"><HelpMark>?</HelpMark></IconCell>
          <CaretCell aria-label="Help options"><Caret /></CaretCell>
          <IconCell aria-label="Minimize"><Icon name="minimize" size={17} /></IconCell>
          <IconCell aria-label="Restore"><Icon name="restore" size={18} /></IconCell>
          <IconCell aria-label="Close" $w={22}><Icon name="close" size={19} /></IconCell>
        </WindowTools>
      </TitleBar>

      <Ribbon>
        <SplitTool>
          <Tool $w={42}><Icon name="exitSketch" /><ToolLabel>{"Exit\nSketch"}</ToolLabel></Tool>
          <CaretCell aria-label="Exit sketch options"><Caret /></CaretCell>
        </SplitTool>
        <RibbonTool icon="dimension" label={"Smart\nDimension"} w={66} menu />
        <Divider />
        <SketchGrid>
          {gridTools.map(([icon, menu]) => (
            <React.Fragment key={icon}>
              <IconCell $w={27} aria-label={icon}><Icon name={icon} size={icon === "point" ? 16 : 19} /></IconCell>
              {menu ? <CaretCell aria-label={`${icon} options`}><Caret /></CaretCell> : <span />}
            </React.Fragment>
          ))}
        </SketchGrid>
        <Divider />
        <RibbonTool icon="trim" label={"Trim\nEntities"} w={49} menu />
        <RibbonTool icon="convert" label={"Convert\nEntities"} w={49} menu />
        <RibbonTool icon="offset" label={"Offset\nEntities"} w={49} low />
        <RibbonTool icon="offsetSurface" label={"Offset\nOn\nSurface"} w={48} low off />
        <CommandList>
          <CommandRow><CommandButton><Icon name="mirror" size={18} />Mirror Entities</CommandButton></CommandRow>
          <CommandRow>
            <CommandButton><Icon name="pattern" size={18} />Linear Sketch Pattern</CommandButton>
            <CaretCell aria-label="Pattern options"><Caret /></CaretCell>
          </CommandRow>
          <CommandRow $off>
            <CommandButton disabled><Icon name="move" size={18} />Move Entities</CommandButton>
            <CaretCell aria-label="Move options"><Caret faded /></CaretCell>
          </CommandRow>
        </CommandList>
        <Divider />
        <RibbonTool icon="relations" label={"Display/Delete\nRelations"} w={86} menu />
        <RibbonTool icon="repair" label={"Repair\nSketch"} w={46} low />
        <Divider />
        <RibbonTool icon="snaps" label={"Quick\nSnaps"} w={43} menu />
        <Divider />
        <RibbonTool icon="rapid" label={"Rapid\nSketch"} w={45} low />
        <RibbonTool icon="instant" label="Instant2D" w={60} low on />
        <RibbonTool icon="contours" label={"Shaded\nSketch\nContours"} w={58} low on />
      </Ribbon>

      <Workspace>
        <Canvas>
          <Model />
          <PanelHandle aria-label="Collapse panel"><Dot /></PanelHandle>
        </Canvas>
        <TabRow>
          {ribbonTabs.map(([label, w]) => (
            <RibbonTab key={label} $w={w} $on={label === "Sketch"}>{label}</RibbonTab>
          ))}
          <ViewWindowTools>
            {["prevPane", "nextPane", "minimize", "restore", "close"].map((n) => (
              <IconCell key={n} aria-label={n}><Icon name={n} size={n === "minimize" ? 17 : 19} /></IconCell>
            ))}
          </ViewWindowTools>
        </TabRow>
        <Body>
          <SidePanel>
            <PanelGrip><Dot /></PanelGrip>
            <PanelTabs>
              {["part", "property", "config", "target", "ball", "monitor"].map((n) => (
                <PanelTab key={n} $on={n === "part"} aria-label={n}><Icon name={n} /></PanelTab>
              ))}
              <TabScroll>
                <CaretCell aria-label="Previous tabs">
                  <svg width="4" height="6" viewBox="0 0 4 6"><path d="M4 0v6L0 3z" fill="#111" /></svg>
                </CaretCell>
                <CaretCell aria-label="Next tabs">
                  <svg width="4" height="6" viewBox="0 0 4 6"><path d="M0 0v6l4-3z" fill="#111" /></svg>
                </CaretCell>
              </TabScroll>
            </PanelTabs>
            <FilterBar>
              <Icon name="filter" />
              <SearchInput aria-label="Filter tree" />
            </FilterBar>
            <Tree>
              <TreeRow $root>
                <TreeItem><Icon name="partRoot" size={19} />{"Part2  (Default<<Default>_Display Sta"}</TreeItem>
              </TreeRow>
              {features.map((f) => (
                <TreeRow key={f.name}>
                  <Expander>
                    {f.open && (
                      <svg width="6" height="8" viewBox="0 0 6 8" aria-hidden="true"><path d="M1 0l4 4-4 4z" fill="#555" /></svg>
                    )}
                  </Expander>
                  <TreeItem><Icon name={f.icon} size={18} />{f.name}</TreeItem>
                </TreeRow>
              ))}
              <RollbackBar />
              <ActiveRow>
                <Expander />
                <TreeItem $on><Icon name="sketchNode" size={18} />(-) Sketch9</TreeItem>
              </ActiveRow>
            </Tree>
            <ScrollStrip>
              <CaretCell aria-label="Scroll left">
                <svg width="6" height="9" viewBox="0 0 6 9"><path d="M5 .5l-4 4 4 4" fill="none" stroke="#444" strokeWidth="1.600" /></svg>
              </CaretCell>
              <ScrollTrack><ScrollThumb /></ScrollTrack>
              <CaretCell aria-label="Scroll right">
                <svg width="6" height="9" viewBox="0 0 6 9"><path d="M1 .5l4 4-4 4" fill="none" stroke="#444" strokeWidth="1.600" /></svg>
              </CaretCell>
            </ScrollStrip>
          </SidePanel>
          <Viewport>
            <ViewTools>
              {viewTools.map(([icon, menu]) => (
                <React.Fragment key={icon}>
                  <IconCell aria-label={icon}><Icon name={icon} /></IconCell>
                  {menu && <CaretCell aria-label={`${icon} options`}><Caret faded /></CaretCell>}
                </React.Fragment>
              ))}
            </ViewTools>
            <ConfirmCorner width="72" height="60" viewBox="0 0 72 60" role="img" aria-label="Exit sketch or cancel">
              <path d="M22 3H2v18q0 6 8 6h12" fill="none" stroke="#bccbd9" strokeWidth="2" />
              <path d="M23 26l9-9v5q9 0 12-7 1 16-12 16v6z" fill="#c3dae7" stroke="#a6bccb" />
              <path d="M50 33l8 7 8-7 4 5-7 7 7 7-4 4-8-6-8 6-4-4 7-7-7-7z" fill="#eab8bc" stroke="#dfb0b5" />
            </ConfirmCorner>
            <TaskPane>
              {taskButtons.map(([icon, label]) => (
                <TaskButton key={icon} $on={icon === "ball"} aria-label={label}><Icon name={icon} size={19} /></TaskButton>
              ))}
            </TaskPane>
            <Triad width="50" height="52" viewBox="0 0 50 52" aria-hidden="true">
              <path d="M10 43V20" stroke="#1c1c9c" strokeWidth="4" />
              <path d="M10 42V20" stroke="#6c6cf0" strokeWidth="2" />
              <path d="M6 22l4-9 4 9z" fill="#1414a0" />
              <path d="M11 43h22" stroke="#a01818" strokeWidth="4" />
              <path d="M11 43h22" stroke="#f07070" strokeWidth="2" />
              <path d="M31 39l9 4-9 4z" fill="#c01010" />
              <path d="M6 3h5L6 10h5" fill="none" stroke="#3434b0" />
              <path d="M41 39l5 8M46 39l-5 8" stroke="#c03434" />
            </Triad>
            <ViewName>*Bottom</ViewName>
          </Viewport>
        </Body>
      </Workspace>

      <BottomTabs>
        <NavKeys>
          {["M3 2v6M8 2L4 5l4 3z", "M7 2L3 5l4 3z", "M3 2l4 3-4 3z", "M7 2v6M2 2l4 3-4 3z"].map((d) => (
            <NavKey key={d} aria-label="Tab scroll">
              <svg width="10" height="10" viewBox="0 0 10 10"><path d={d} fill="none" stroke="#7a7a7a" /></svg>
            </NavKey>
          ))}
        </NavKeys>
        <BottomTab $w={57} $on>Model</BottomTab>
        <BottomTab $w={68}>3D Views</BottomTab>
        <BottomTab $w={108}>Motion Study 1</BottomTab>
      </BottomTabs>
      <StatusBar>
        <StatusHint>Select edges, faces, features or loops to fillet.</StatusHint>
        <StatusField $w={79}>-29.15mm</StatusField>
        <StatusField $w={55}>11.20mm</StatusField>
        <StatusField $w={63}>0.00mm</StatusField>
        <StatusField $w={83} $line>Under Defined</StatusField>
        <StatusField $w={7} $line />
        <StatusField $w={4} />
        <StatusField $w={88} $line>Editing Sketch9</StatusField>
        <StatusField $w={14} />
        <StatusField $w={17} $line><Icon name="lights" size={14} /></StatusField>
        <StatusField $w={31} />
        <StatusField $w={54}>MMGS</StatusField>
        <StatusField $w={73}><Caret up /></StatusField>
        <StatusField $w={15}><Icon name="tag" size={16} /></StatusField>
      </StatusBar>

      <Watermark><WatermarkName>莫西网</WatermarkName>www.3dmox.com</Watermark>
    </Page>
  );
}
